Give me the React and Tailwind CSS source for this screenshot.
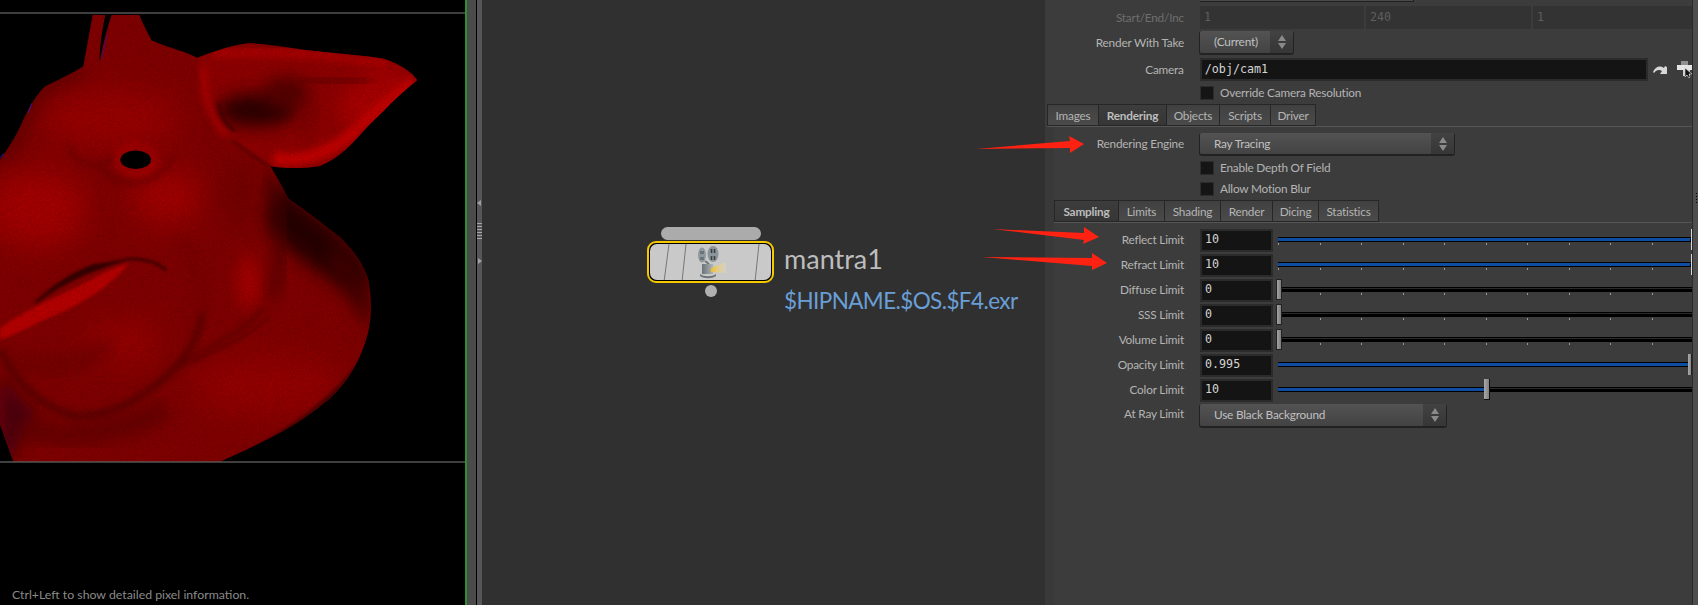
import React from "react";

const UI = "font-['Lato','Liberation_Sans',sans-serif]";
const MONO = "font-['DejaVu_Sans_Mono','Liberation_Mono',monospace]";
const TXT = "text-[11.8px] tracking-[-0.2px]";

function Pig() {
  const outline =
    "M250 172 C190 205 150 215 130 228 C100 255 75 300 60 330 C40 365 20 390 0 415 L0 1100 L40 1197 L660 1197 C740 1165 860 1120 950 1060 C1020 1015 1075 960 1105 860 C1115 820 1115 770 1105 725 C1090 680 1050 640 1020 615 C975 585 910 540 865 515 C845 480 825 450 810 430 C860 438 920 436 960 430 C1020 410 1060 370 1100 330 C1150 290 1200 240 1252 208 C1240 190 1200 165 1150 152 C1080 142 950 135 880 125 C820 118 770 110 740 113 C690 118 640 135 592 150 C560 135 510 125 455 105 C440 80 425 55 418 38 L335 38 C322 70 310 110 300 155 C285 160 265 165 250 172 Z";
  return (
    <svg className="absolute left-0 top-0" width="465" height="605" viewBox="0 0 465 605">
      <defs>
        <clipPath id="vp"><rect x="0" y="14" width="465" height="448" /></clipPath>
        <clipPath id="pigshape"><path d={outline} /><path d="M250 172 L278 38 L316 38 C305 80 300 120 298 158 Z" /></clipPath>
        <filter id="b4" x="-30%" y="-30%" width="160%" height="160%"><feGaussianBlur stdDeviation="4" /></filter>
        <filter id="b10" x="-30%" y="-30%" width="160%" height="160%"><feGaussianBlur stdDeviation="10" /></filter>
        <filter id="b22" x="-50%" y="-50%" width="200%" height="200%"><feGaussianBlur stdDeviation="24" /></filter>
        <filter id="b45" x="-50%" y="-50%" width="200%" height="200%"><feGaussianBlur stdDeviation="42" /></filter>
        <filter id="grain" x="0" y="0" width="100%" height="100%">
          <feTurbulence type="fractalNoise" baseFrequency="0.7" numOctaves="2" seed="4" />
          <feColorMatrix values="0 0 0 0 0  0 0 0 0 0  0 0 0 0 0  0.9 0 0 0 -0.28" />
        </filter>
      </defs>
      <g clipPath="url(#vp)">
        <g transform="scale(0.33333 0.3858)">
          <g clipPath="url(#pigshape)">
            <rect x="0" y="0" width="1300" height="1300" fill="#820000" />
            {/* broad lights */}
            <ellipse cx="330" cy="310" rx="210" ry="80" fill="#9a0000" filter="url(#b45)" />
            <ellipse cx="110" cy="540" rx="150" ry="100" fill="#a60000" filter="url(#b45)" />
            <ellipse cx="500" cy="510" rx="110" ry="70" fill="#a40000" filter="url(#b45)" />
            <ellipse cx="745" cy="730" rx="30" ry="70" fill="#ac0000" filter="url(#b22)" />
            <ellipse cx="370" cy="890" rx="110" ry="50" fill="#9c0000" filter="url(#b45)" />
            <ellipse cx="800" cy="1000" rx="230" ry="80" fill="#960000" filter="url(#b45)" />
            {/* silhouette falloff */}
            <path d="M250 172 C190 205 150 215 130 228 C100 255 75 300 60 330 C40 365 20 390 0 415" stroke="#5c0000" strokeWidth="30" fill="none" filter="url(#b22)" />
            {/* under ear, side of head */}
            <ellipse cx="730" cy="500" rx="70" ry="90" fill="#740000" filter="url(#b45)" />
            {/* neck shadows */}
            <path d="M825 470 C950 560 1070 620 1125 740 C1060 760 900 700 800 580 Z" fill="#260000" filter="url(#b22)" />
            <path d="M1000 620 C1080 680 1120 760 1115 850 C1080 820 1040 760 980 700 Z" fill="#400000" filter="url(#b22)" />
            <path d="M805 450 C840 530 860 640 820 770" stroke="#4c0000" strokeWidth="26" fill="none" filter="url(#b22)" />
            <path d="M1110 890 C1040 1000 900 1100 680 1197 L1110 1197 Z" fill="#4e0000" filter="url(#b4)" />
            <path d="M0 950 C30 1000 60 1040 120 1070 C80 1110 50 1150 35 1197 L0 1197 Z" fill="#4c0008" filter="url(#b22)" />
            <path d="M60 1110 C200 1140 340 1130 500 1060" stroke="#640000" strokeWidth="50" fill="none" filter="url(#b22)" />
            {/* jaw fold */}
            <path d="M0 905 C40 980 110 1050 220 1078 C330 1088 450 1020 530 950 C580 900 600 860 606 810" stroke="#540000" strokeWidth="16" fill="none" filter="url(#b10)" />
            <path d="M606 810 C612 740 590 660 530 610" stroke="#6a0000" strokeWidth="14" fill="none" filter="url(#b22)" />
            <path d="M540 950 C620 900 720 870 790 800" stroke="#580000" strokeWidth="10" fill="none" filter="url(#b10)" />
            <path d="M580 940 C660 900 740 880 810 820" stroke="#660000" strokeWidth="6" fill="none" filter="url(#b4)" />
            <path d="M30 930 C120 965 240 955 340 890" stroke="#680000" strokeWidth="26" fill="none" filter="url(#b22)" />
            {/* mouth */}
            <path d="M105 785 C190 730 290 690 380 672 C430 668 470 680 500 700" stroke="#3c0000" strokeWidth="7" fill="none" filter="url(#b4)" />
            <path d="M110 780 C190 730 290 695 370 676 L280 685 C220 705 160 735 110 780 Z" fill="#340000" filter="url(#b4)" />
            <path d="M0 850 C80 800 200 760 300 712 C330 700 360 690 385 682 C350 730 250 790 130 830 C80 850 40 870 0 880 Z" fill="#b80000" filter="url(#b4)" />
            {/* ear */}
            <path d="M592 150 C640 130 700 115 745 113 C850 125 1000 140 1150 152 C1200 165 1240 190 1252 208 C1180 260 1120 310 1090 340 C1050 380 1000 420 950 432 C900 438 850 436 810 430 C770 400 720 370 690 360 C640 320 600 240 592 150 Z" fill="#900000" filter="url(#b4)" />
            <path d="M1150 165 C1200 180 1230 195 1240 208 C1180 260 1120 310 1090 340 L1010 300 L1040 230 Z" fill="#a80000" filter="url(#b22)" />
            <path d="M640 140 C850 125 1050 150 1160 165" stroke="#b00000" strokeWidth="20" fill="none" filter="url(#b10)" />
            <path d="M820 410 C900 425 1000 395 1070 335 C1120 295 1170 255 1240 212" stroke="#c60000" strokeWidth="32" fill="none" filter="url(#b10)" />
            <ellipse cx="770" cy="285" rx="120" ry="42" fill="#2c0000" filter="url(#b22)" />
            <ellipse cx="860" cy="240" rx="70" ry="40" fill="#520000" filter="url(#b22)" />
            <path d="M900 205 C980 215 1050 215 1110 205" stroke="#640000" strokeWidth="30" fill="none" filter="url(#b22)" />
            <path d="M930 250 C950 300 930 330 900 350" stroke="#680000" strokeWidth="18" fill="none" filter="url(#b22)" />
            <path d="M612 175 C606 250 635 320 680 350" stroke="#b00000" strokeWidth="18" fill="none" filter="url(#b10)" />
            <path d="M655 265 C660 300 680 325 705 340" stroke="#420000" strokeWidth="7" fill="none" filter="url(#b4)" />
            <path d="M700 365 C735 390 770 412 810 432" stroke="#600000" strokeWidth="7" fill="none" filter="url(#b4)" />
            {/* eye */}
            <path d="M200 370 C230 440 300 440 350 405" stroke="#6c0000" strokeWidth="10" fill="none" filter="url(#b10)" />
            <path d="M295 430 C340 480 430 490 490 440 C510 425 520 410 530 400" stroke="#6a0000" strokeWidth="10" fill="none" filter="url(#b10)" />
            <ellipse cx="407" cy="414" rx="56" ry="36" fill="none" stroke="#ae0000" strokeWidth="14" filter="url(#b10)" />
            <ellipse cx="407" cy="414" rx="46" ry="24" fill="#000" />
            {/* back ear split */}
            <path d="M300 155 C310 110 322 70 335 38 L318 38 C308 80 300 120 298 158 Z" fill="#100010" />
            <path d="M322 90 L306 150" stroke="#3a10a0" strokeWidth="2" fill="none" />
            <rect x="0" y="0" width="1300" height="1300" filter="url(#grain)" opacity="0.35" />
          </g>
          <path d="M95 268 L84 292" stroke="#3a1490" strokeWidth="3" />
          <path d="M0 410 L12 398" stroke="#301080" strokeWidth="3" />
        </g>
      </g>
      <rect x="0" y="12.5" width="465" height="1" fill="#7e7e7e" />
      <rect x="0" y="461.5" width="465" height="1" fill="#7e7e7e" />
    </svg>
  );
}

function Projector() {
  return (
    <svg width="34" height="34" viewBox="0 0 34 34">
      <defs>
        <linearGradient id="cone" x1="0" x2="1"><stop offset="0" stopColor="#f1bd2a" /><stop offset="1" stopColor="#f0e0a8" stopOpacity="0.25" /></linearGradient>
        <linearGradient id="pb" x1="0" x2="1"><stop offset="0" stopColor="#6a7377" /><stop offset="1" stopColor="#aeb5b8" /></linearGradient>
        <filter id="soft"><feGaussianBlur stdDeviation="0.35" /></filter>
      </defs>
      <g filter="url(#soft)">
        <ellipse cx="6" cy="9" rx="4" ry="7.5" fill="#8f989c" />
        <path d="M5 5 V8 M7 5 V8 M5 11 V14 M7 11 V14" stroke="#555c60" strokeWidth="1.2" />
        <ellipse cx="17" cy="8" rx="5.5" ry="8" fill="#8c9599" />
        <path d="M15.5 3 V7 M18.5 3 V7 M15.5 10 V14 M18.5 10 V14" stroke="#3a3f42" strokeWidth="1.6" />
        <path d="M9 15 L13 18" stroke="#6d7579" strokeWidth="2" />
        <path d="M6 18 H17 V28 H6 Z" fill="url(#pb)" />
        <path d="M4 28 C8 31 16 31 20 28 V30 C16 33 8 33 4 30 Z" fill="#6d7579" />
        <path d="M15 22 L30 16 V27 L15 26 Z" fill="url(#cone)" />
      </g>
    </svg>
  );
}

function Node() {
  return (
    <div className="absolute left-[165px] top-[227px] flex items-start">
      <div className="flex flex-col items-center w-[127px]">
        <div className="w-[100px] h-[13px] rounded-full bg-[#ababab]" />
        <div className="mt-[1px] relative w-[127px] h-[42px] rounded-[9px] border-2 border-[#f5c800] bg-black p-px">
          <div className="w-full h-full rounded-[7px] bg-[#c9c9c9] relative overflow-hidden flex items-center justify-center">
            <svg className="absolute left-0 top-0" width="123" height="38" viewBox="0 0 123 38">
              <path d="M19 0 L14 38 M36 0 L32 38 M109 0 L105 38" stroke="#777" strokeWidth="1" fill="none" />
            </svg>
            <div className="relative left-[2px] top-[1px]"><Projector /></div>
          </div>
        </div>
        <div className="mt-[2px] w-[12px] h-[12px] rounded-full bg-[#b0b0b0]" />
      </div>
      <div className={`${UI} ml-[10px] pt-[15px]`}>
        <div className="text-[27px] leading-[34px] text-[#bdbdbd]">mantra1</div>
        <div className="text-[22.5px] tracking-[-0.6px] leading-[30px] mt-[10px] text-[#6a9fd6] whitespace-nowrap">$HIPNAME.$OS.$F4.exr</div>
      </div>
    </div>
  );
}

function Arrows() {
  return (
    <svg className="absolute left-0 top-0 pointer-events-none" width="1698" height="605" viewBox="0 0 1698 605">
      <path d="M976 149 L1070 141 L1069 136 L1084 144 L1070 153 L1070 148 Z" fill="#ff2212" />
      <path d="M992 229 L1084 233 L1084 227 L1099 237 L1083 244 L1084 240 Z" fill="#ff2212" />
      <path d="M982 257 L1092 258 L1092 253 L1107 263 L1092 270 L1092 266 Z" fill="#ff2212" />
    </svg>
  );
}

function Label({ children, dim, flush }) {
  return (
    <div className={`w-[130px] text-right whitespace-nowrap ${flush ? "pb-[2px]" : "pt-[1px]"} ${TXT} ${dim ? "text-[#6e6e6e]" : "text-[#b4b4b4]"}`}>
      {children}
    </div>
  );
}

function Updown() {
  return (
    <svg width="10" height="16" viewBox="0 0 10 16">
      <path d="M5 1 L9 7 H1 Z M5 15 L9 9 H1 Z" fill="#8a8a8a" />
    </svg>
  );
}

function Dropdown({ text, className }) {
  return (
    <div className={`h-full flex rounded-[2px] shadow-[0_1px_0_1px_#222] bg-gradient-to-b from-[#535353] to-[#434343] ${className}`}>
      <div className={`flex-1 pl-[14px] text-[#c0c0c0] flex items-center ${TXT}`}>{text}</div>
      <div className="w-[23px] bg-gradient-to-b from-[#424242] to-[#363636] flex items-center justify-center rounded-r-[2px]">
        <Updown />
      </div>
    </div>
  );
}

function Field({ value, className }) {
  return (
    <div className={`h-full bg-[#141414] border-2 border-[#2b2b2b] pl-[3px] flex items-center text-[11.7px] text-[#d4d4d4] ${MONO} ${className || ""}`}>
      {value}
    </div>
  );
}

function Check({ label }) {
  return (
    <div className="ml-[146px] h-[14px] flex items-center">
      <div className="w-[14px] h-[14px] bg-[#151515] border border-[#2c2c2c]" />
      <div className={`ml-[6px] text-[#b4b4b4] ${TXT}`}>{label}</div>
    </div>
  );
}

function Tabs({ items, active, className, widths }) {
  return (
    <div className={`h-[23px] flex border-b border-[#565656] ${className}`}>
      {items.map((t, i) => (
        <div
          key={t}
          className={`h-[22px] pt-[1px] flex items-center justify-center border border-[#262626] -mr-px ${TXT} ${widths[i]} ${
            i === active
              ? "bg-gradient-to-b from-[#3d3d3d] to-[#363636] font-bold text-[#bdbdbd]"
              : "bg-gradient-to-b from-[#414141] to-[#4a4a4a] text-[#b4b4b4]"
          }`}
        >
          {t}
        </div>
      ))}
    </div>
  );
}

const TICKS = [0, 1, 2, 3, 4, 5, 6, 7, 8, 9];

function Slider({ fill, ticks, handle }) {
  return (
    <div className="relative ml-[5px] w-[414px] h-full">
      <div className="absolute left-0 right-0 top-[8px] h-[5px] bg-black border-t border-black">
        <div className="h-px bg-[#2b2b2b] w-full" />
        {fill ? (
          <div className="absolute left-0 top-0 h-[3px] bg-[#0f4da3]" style={{ width: fill }} />
        ) : null}
      </div>
      {ticks ? (
        <div className="absolute left-0 top-[14px] flex">
          {TICKS.map((t) => (
            <div key={t} className="w-[41.5px] h-[2px]"><div className="w-px h-[2px] bg-[#9a9a9a]" /></div>
          ))}
        </div>
      ) : null}
      {handle}
    </div>
  );
}

const HandleThin = <div className="absolute right-0 top-0 w-px h-[21px] bg-[#d8d8d8]" />;
const HandleLeft = (
  <div className="absolute left-[-2px] top-0 w-[6px] h-[21px] border border-[#222] bg-gradient-to-r from-[#a4a4a4] to-[#7c7c7c]" />
);
const HandleEnd = (
  <div className="absolute right-0 top-0 w-[4px] h-[21px] border-r border-[#222] bg-gradient-to-r from-[#aaa] to-[#888]" />
);
const HandleMid = (
  <div className="absolute left-[206px] top-0 w-[6px] h-[21px] border-r border-b border-[#111] bg-gradient-to-r from-[#aaa] to-[#808080]" />
);

function SliderRow({ label, value, fill, ticks, handle, className }) {
  return (
    <div className={`h-[23px] flex items-center ${className || ""}`}>
      <Label flush>{label}</Label>
      <div className="ml-[16px] w-[73px] h-full"><Field value={value} className="pb-[2px]" /></div>
      <Slider fill={fill} ticks={ticks} handle={handle} />
    </div>
  );
}

function Splitter() {
  return (
    <div className="flex shrink-0">
      <div className="w-[2px] bg-[#2f8f2f]" />
      <div className="w-[9px] bg-[#4b4b4b]" />
      <div className="w-px bg-black" />
      <div className="w-[5px] bg-[#565656] flex flex-col items-center pt-[200px]">
        <svg width="5" height="7" viewBox="0 0 5 7"><path d="M4 0 V6 L0 3 Z" fill="#a0a0a0" /></svg>
        <div className="mt-[15px] w-[5px] h-[18px] bg-[radial-gradient(#a8a8a8_0.7px,transparent_0.8px)] bg-[length:2px_3px]" />
        <svg className="mt-[18px]" width="5" height="7" viewBox="0 0 5 7"><path d="M1 0 V6 L5 3 Z" fill="#a0a0a0" /></svg>
      </div>
    </div>
  );
}

function Panel() {
  return (
    <div className={`w-[653px] shrink-0 flex bg-[#3c3c3c] ${UI}`}>
      <div className="w-[647px] flex flex-col">
        <div className="ml-[155px] w-[213px] h-[2px] bg-[#4a4a4a] border-b border-[#1f1f1f] shadow-[1px_0_0_#1f1f1f]" />
        <div className="ml-[9px]">
          <div className="mt-[4px] h-[23px] flex items-center">
            <Label dim>Start/End/Inc</Label>
            <div className="ml-[16px] flex h-full gap-[2px]">
              {["1", "240", "1"].map((v, i) => (
                <div
                  key={i}
                  className={`h-full bg-[#333333] pl-[4px] flex items-center text-[11.7px] text-[#5e5e5e] ${MONO} ${
                    i === 2 ? "w-[159px]" : i === 1 ? "w-[165px]" : "w-[164px]"
                  }`}
                >
                  {v}
                </div>
              ))}
            </div>
          </div>
          <div className="mt-[2px] h-[22px] flex items-center">
            <Label>Render With Take</Label>
            <div className="ml-[16px] h-full w-[93px]"><Dropdown text="(Current)" /></div>
          </div>
          <div className="mt-[5px] h-[23px] flex items-center">
            <Label>Camera</Label>
            <div className="ml-[16px] h-full w-[449px]"><Field value="/obj/cam1" /></div>
            <svg className="ml-[4px]" width="16" height="12" viewBox="0 0 16 12">
              <path d="M1 8 C3 3 8 1 12 4 L13 2 L15 3 V10 H8 L10 7 C7 5 4 6 2 9 Z" fill="#d8d8d8" />
            </svg>
            <svg className="ml-[9px] -mt-[1px] shrink-0" width="15" height="17" viewBox="0 0 15 17">
              <rect x="4" y="0" width="7" height="4" fill="#8f8f8f" />
              <rect x="0" y="4" width="15" height="5" fill="#e4e4e4" />
              <rect x="6" y="9" width="7" height="6" fill="#cfcfcf" />
              <path d="M8 7 V16 L10 14 L12 17 L13 16 L12 13 H15 Z" fill="#111" stroke="#ddd" strokeWidth="0.6" />
            </svg>
          </div>
          <div className="mt-[5px]"><Check label="Override Camera Resolution" /></div>
        </div>
        <Tabs
          className="mt-[4px] ml-[2px]"
          items={["Images", "Rendering", "Objects", "Scripts", "Driver"]}
          active={1}
          widths={["w-[52px]", "w-[69px]", "w-[54px]", "w-[52px]", "w-[46px]"]}
        />
        <div className="flex-1 pl-[9px] bg-[#393939]">
          <div className="h-full bg-[#3c3c3c]">
            <div className="pt-[6px] h-[27px] flex items-center">
              <Label>Rendering Engine</Label>
              <div className="ml-[16px] h-full w-[254px]"><Dropdown text="Ray Tracing" /></div>
            </div>
            <div className="mt-[7px]"><Check label="Enable Depth Of Field" /></div>
            <div className="mt-[7px]"><Check label="Allow Motion Blur" /></div>
            <Tabs
              className="mt-[4px]"
              items={["Sampling", "Limits", "Shading", "Render", "Dicing", "Statistics"]}
              active={0}
              widths={["w-[65px]", "w-[47px]", "w-[57px]", "w-[53px]", "w-[47px]", "w-[61px]"]}
            />
            <div className="mt-[6px] flex flex-col gap-[2px]">
              <SliderRow label="Reflect Limit" value="10" fill="412px" ticks handle={HandleThin} />
              <SliderRow label="Refract Limit" value="10" fill="412px" ticks handle={HandleThin} />
              <SliderRow label="Diffuse Limit" value="0" ticks handle={HandleLeft} />
              <SliderRow label="SSS Limit" value="0" ticks handle={HandleLeft} />
              <SliderRow label="Volume Limit" value="0" ticks handle={HandleLeft} />
              <SliderRow label="Opacity Limit" value="0.995" fill="410px" handle={HandleEnd} />
              <SliderRow label="Color Limit" value="10" fill="206px" handle={HandleMid} />
              <div className="h-[22px] flex items-center">
                <Label flush>At Ray Limit</Label>
                <div className="ml-[16px] h-full w-[246px]"><Dropdown text="Use Black Background" /></div>
              </div>
            </div>
          </div>
        </div>
      </div>
      <div className="w-px bg-[#2a2a2a]" />
      <div className="w-[5px] bg-[#4e4e4e] pt-[192px] pl-[2px]">
        <div className="w-[3px] h-[11px] bg-[radial-gradient(#000_0.9px,transparent_1px)] bg-[length:3px_3px]" />
      </div>
    </div>
  );
}

export default function App() {
  return (
    <div className="relative w-[1698px] h-[605px] overflow-hidden flex bg-[#303030]">
      <div className="relative w-[465px] shrink-0 bg-black">
        <Pig />
        <div className={`${UI} absolute left-[12px] bottom-[1px] text-[12.3px] text-[#8a8a8a] whitespace-nowrap`}>
          Ctrl+Left to show detailed pixel information.
        </div>
      </div>
      <Splitter />
      <div className="relative flex-1 bg-[#303030]"><Node /></div>
      <Panel />
      <Arrows />
    </div>
  );
}
